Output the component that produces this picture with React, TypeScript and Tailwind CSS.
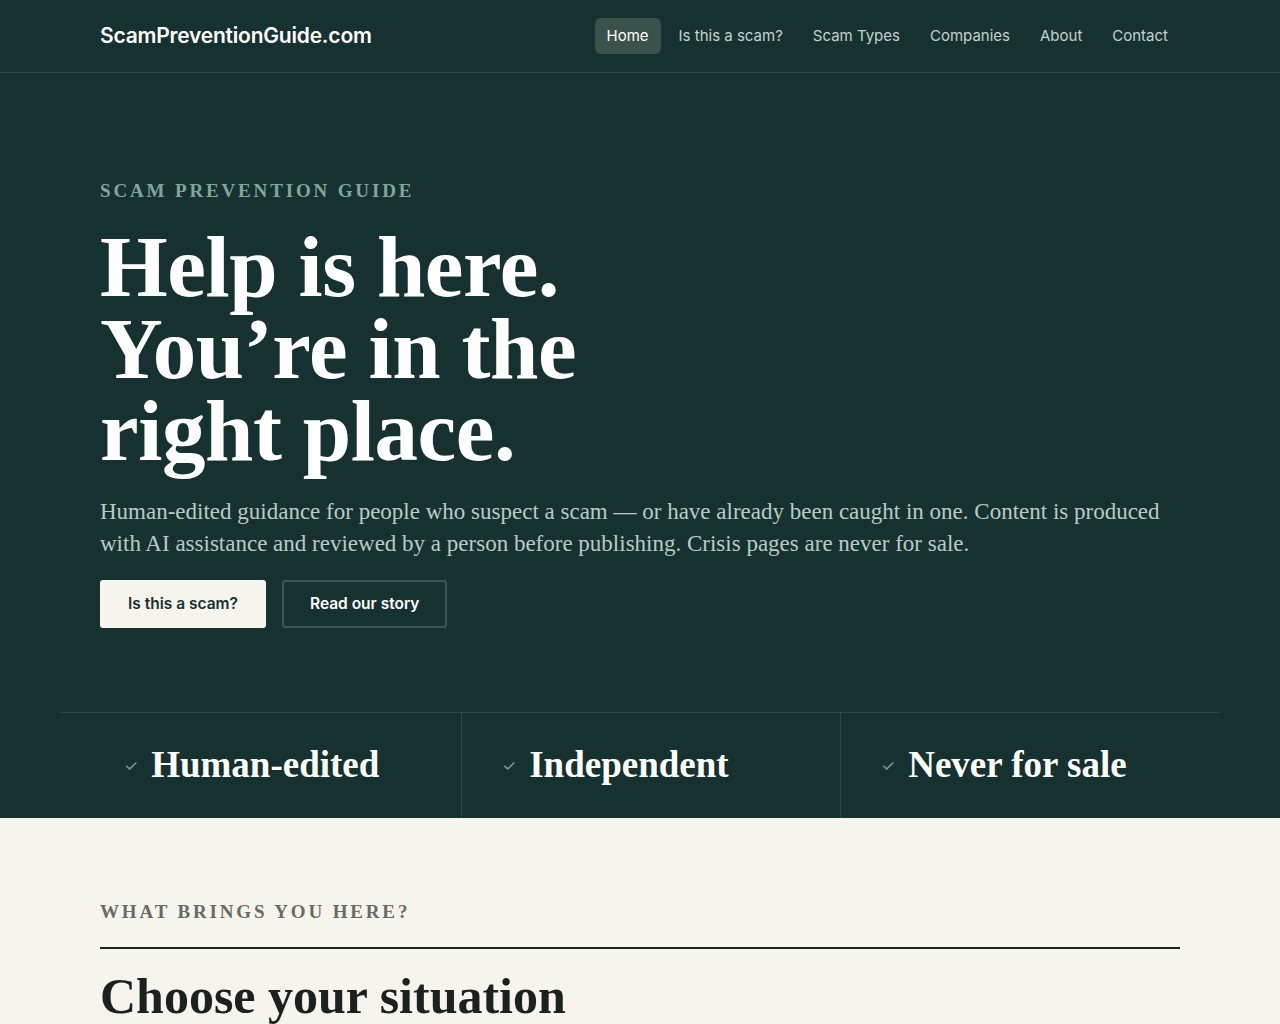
const NAV = ['Home', 'Is this a scam?', 'Scam Types', 'Companies', 'About', 'Contact'];

const POINTS = [
  { label: 'Human-edited', cls: 'pl-16' },
  { label: 'Independent', cls: 'pl-10 border-l border-[#2b4842]' },
  { label: 'Never for sale', cls: 'pl-10 border-l border-[#2b4842]' },
];

const serif = "font-['Liberation_Serif',serif]";
const sans = "font-['Inter',sans-serif]";

export default function App() {
  return (
    <div className={`min-h-screen bg-[#f7f4ee] ${sans}`}>
      <div className="bg-[#163130]">
        {/* Header */}
        <header className="border-b border-[#2b4842]">
          <div className="mx-auto flex h-[72px] max-w-[1080px] items-center justify-between">
            <span className="text-[21px] font-semibold tracking-[-0.01em] text-white">
              ScamPreventionGuide.com
            </span>
            <nav className="flex items-center gap-1.5">
              {NAV.map((item, i) => (
                <a
                  key={item}
                  className={
                    i === 0
                      ? 'rounded-md bg-[#3a514c] px-3 py-[7px] text-[15px] text-white'
                      : 'rounded-md px-3 py-[7px] text-[15px] text-[#c4d3cd]'
                  }
                >
                  {item}
                </a>
              ))}
            </nav>
          </div>
        </header>

        {/* Hero */}
        <section className="mx-auto max-w-[1080px] pt-[104px] pb-[84px]">
          <p className={`${serif} text-[19px] font-bold tracking-[0.15em] text-[#7fa89a]`}>
            SCAM PREVENTION GUIDE
          </p>
          <h1
            className={`${serif} mt-[20px] text-[87px] font-bold leading-[82px] tracking-[-0.005em] text-white`}
          >
            Help is here.
            <br />
            You’re in the
            <br />
            right place.
          </h1>
          <p className={`${serif} mt-[24px] text-[23px] leading-[32px] text-[#b9ccc4]`}>
            Human-edited guidance for people who suspect a scam — or have already been caught in one. Content is produced
            <br />
            with AI assistance and reviewed by a person before publishing. Crisis pages are never for sale.
          </p>
          <div className="mt-[20px] flex gap-4">
            <button className="h-12 rounded-[3px] bg-[#f7f4ee] px-7 text-[15.5px] font-semibold text-[#173130]">
              Is this a scam?
            </button>
            <button className="h-12 rounded-[3px] border-2 border-[#3a5851] px-[26px] text-[15.5px] font-semibold text-white">
              Read our story
            </button>
          </div>
        </section>

        {/* Trust band */}
        <div className="mx-auto grid max-w-[1160px] grid-cols-[401px_379px_380px] border-t border-[#2b4842]">
          {POINTS.map((p) => (
            <div key={p.label} className={`flex h-[105px] items-center gap-[13px] ${p.cls}`}>
              <span className="text-[16px] text-[#7a9f93]">✓</span>
              <span className={`${serif} text-[37px] font-bold text-white`}>{p.label}</span>
            </div>
          ))}
        </div>
      </div>

      {/* Situations */}
      <section className="mx-auto max-w-[1080px] pt-[80px]">
        <p className={`${serif} text-[19px] font-bold tracking-[0.15em] text-[#666b66]`}>
          WHAT BRINGS YOU HERE?
        </p>
        <div className="mt-[21px] border-t-2 border-[#1b231f]" />
        <h2 className={`${serif} mt-[20px] text-[50px] font-bold leading-[1.1] text-[#1b211e]`}>
          Choose your situation
        </h2>
      </section>
    </div>
  );
}
